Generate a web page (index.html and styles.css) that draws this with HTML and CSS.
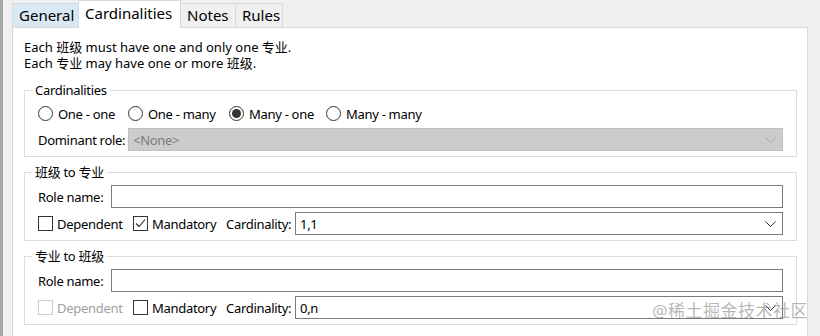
FILE: index.html
```html
<!DOCTYPE html>
<html lang="en">
<head>
	<meta charset="UTF-8">
	<title>Association properties</title>
	<link rel="stylesheet" href="styles.css">
</head>

<body>

<div class="window">
	<div class="tabs">
		<div class="tab tab-general">General</div>
		<div class="tab tab-cards active">Cardinalities</div>
		<div class="tab tab-notes">Notes</div>
		<div class="tab tab-rules">Rules</div>
	</div>

	<div class="panel">
		<p class="summary">
			Each 班级 must have one and only one 专业.<br>
			Each 专业 may have one or more 班级.
		</p>

		<fieldset class="group">
			<legend>Cardinalities</legend>
			<div class="row radios">
				<span class="option opt-1"><span class="radio"></span>One - one</span>
				<span class="option opt-2"><span class="radio"></span>One - many</span>
				<span class="option opt-3"><span class="radio checked"></span>Many - one</span>
				<span class="option opt-4"><span class="radio"></span>Many - many</span>
			</div>
			<div class="row">
				<span class="label label-dominant">Dominant role:</span>
				<div class="select disabled">
					<span>&lt;None&gt;</span>
					<svg class="chevron" width="11" height="6" viewBox="0 0 11 6"><path d="M0.5 0.5 L5.5 5.5 L10.5 0.5" fill="none" stroke="currentColor"/></svg>
				</div>
			</div>
		</fieldset>

		<fieldset class="group">
			<legend>班级 to 专业</legend>
			<div class="row">
				<span class="label label-role">Role name:</span>
				<div class="textbox"></div>
			</div>
			<div class="row">
				<span class="option check-dep"><span class="checkbox"></span>Dependent</span>
				<span class="option check-man">
					<span class="checkbox">
						<svg width="13" height="13" viewBox="0 0 13 13"><path d="M2 6.5 L5 9.5 L11 2.5" fill="none" stroke="#222" stroke-width="1.1"/></svg>
					</span>Mandatory
				</span>
				<span class="label label-card">Cardinality:</span>
				<div class="select">
					<span>1,1</span>
					<svg class="chevron" width="11" height="6" viewBox="0 0 11 6"><path d="M0.5 0.5 L5.5 5.5 L10.5 0.5" fill="none" stroke="currentColor"/></svg>
				</div>
			</div>
		</fieldset>

		<fieldset class="group">
			<legend>专业 to 班级</legend>
			<div class="row">
				<span class="label label-role">Role name:</span>
				<div class="textbox"></div>
			</div>
			<div class="row">
				<span class="option check-dep disabled"><span class="checkbox"></span>Dependent</span>
				<span class="option check-man"><span class="checkbox"></span>Mandatory</span>
				<span class="label label-card">Cardinality:</span>
				<div class="select">
					<span>0,n</span>
					<svg class="chevron" width="11" height="6" viewBox="0 0 11 6"><path d="M0.5 0.5 L5.5 5.5 L10.5 0.5" fill="none" stroke="currentColor"/></svg>
				</div>
			</div>
		</fieldset>
	</div>

	<div class="watermark">@稀土掘金技术社区</div>
</div>

</body>
</html>
```

FILE: styles.css
```css
body {
	margin: 0;
	min-height: 100vh;
	background: #f0f0f0;
	box-shadow: inset 3px 0 #a6a6a6;
	color: #000;
	font-family: "Noto Sans", "Noto Sans CJK SC", sans-serif;
	font-size: 13px;
	line-height: 16px;
	overflow: hidden;
}

.window {
	position: relative;
	margin: 0 12px 0 12px;
}

/* tab strip */

.tabs {
	display: flex;
	align-items: flex-end;
	height: 27px;
}

.tab {
	box-sizing: border-box;
	height: 24px;
	padding: 0 6px;
	border: 1px solid #d9d9d9;
	border-bottom: none;
	margin-right: -1px;
	font-size: 15px;
	line-height: 22px;
	background: #f0f0f0;
	white-space: nowrap;
}

.tab-general {
	width: 67px;
	background: #d9e8f5;
}

.tab-cards {
	width: 103px;
}

.tab-notes {
	width: 56px;
}

.tab-rules {
	width: 48px;
}

.tab.active {
	position: relative;
	z-index: 1;
	height: 28px;
	margin-bottom: -1px;
	background: #fff;
	line-height: 24px;
}

/* page */

.panel {
	min-height: 320px;
	padding: 11px 10px 0 11px;
	background: #fff;
	border: 1px solid #d9d9d9;
}

.summary {
	margin: 0 0 11px;
}

.group {
	margin: 0 0 7px;
	padding: 0 13px 5px;
	border: 1px solid #dcdcdc;
	letter-spacing: -0.3px;
}

.group legend {
	margin-left: -6px;
	padding: 0 3px;
	line-height: 16px;
}

.row {
	display: flex;
	align-items: center;
	margin-top: 4px;
	white-space: nowrap;
}

.group legend + .row {
	margin-top: 5px;
}

.radios {
	height: 21px;
	margin-top: 6px;
}

.option {
	display: flex;
	align-items: center;
	gap: 5px;
	flex: none;
}

.opt-1 { width: 90px; }
.opt-2 { width: 101px; }
.opt-3 { width: 97px; }

.radio {
	box-sizing: border-box;
	width: 15px;
	height: 15px;
	border: 1px solid #333;
	border-radius: 50%;
	display: flex;
	align-items: center;
	justify-content: center;
}

.radio.checked::after {
	content: "";
	width: 9px;
	height: 9px;
	border-radius: 50%;
	background: #333;
}

.checkbox {
	box-sizing: border-box;
	width: 15px;
	height: 15px;
	border: 1px solid #333;
	display: flex;
	align-items: center;
	justify-content: center;
	flex: none;
}

.check-dep { width: 95px; gap: 4px; }
.check-man { width: 93px; gap: 4px; }

.option.disabled {
	color: #a0a0a0;
}

.option.disabled .checkbox {
	border-color: #cccccc;
}

.label {
	flex: none;
}

.label-dominant { width: 90px; }
.label-role { width: 73px; }
.label-card { width: 69px; }

.textbox,
.select {
	box-sizing: border-box;
	flex: 1;
	height: 23px;
	border: 1px solid #7a7a7a;
	background: #fff;
}

.select {
	display: flex;
	align-items: center;
	justify-content: space-between;
	padding: 0 6px 0 4px;
	color: #000;
}

.select .chevron {
	color: #333;
}

.select.disabled {
	background: #cccccc;
	border-color: #bfbfbf;
	color: #7a7a7a;
}

.select.disabled .chevron {
	color: #a8a8a8;
}

.watermark {
	position: absolute;
	right: 0;
	top: 300px;
	font-size: 17px;
	line-height: 22px;
	color: rgba(120, 120, 120, 0.55);
	letter-spacing: 0.5px;
}
```
